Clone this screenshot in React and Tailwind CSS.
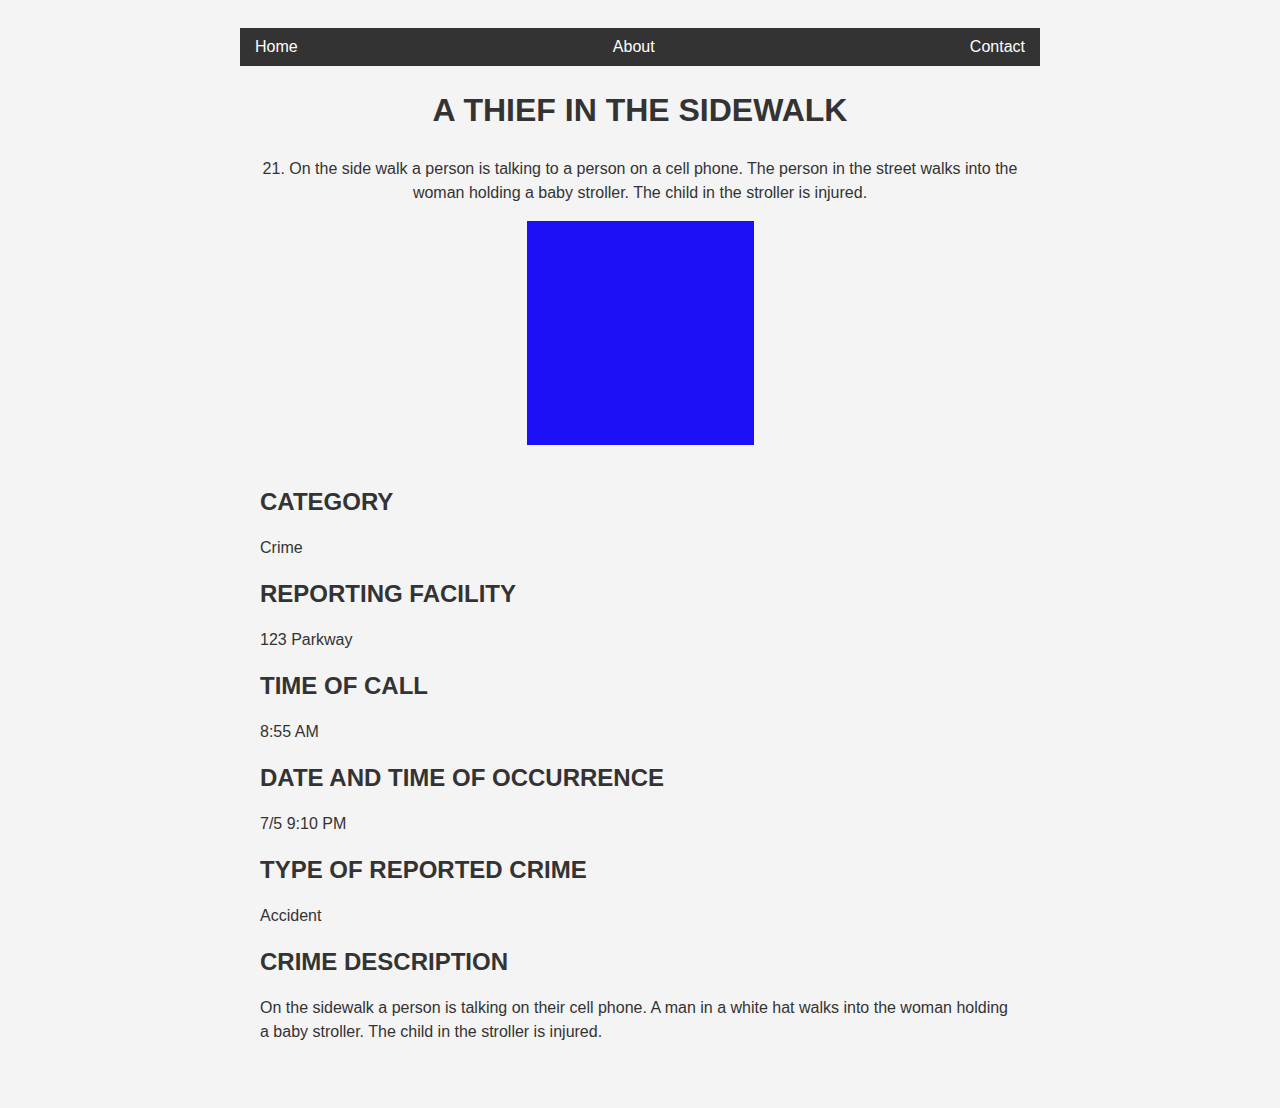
import React from 'react';

const details = [
  { label: 'CATEGORY', value: 'Crime' },
  { label: 'REPORTING FACILITY', value: '123 Parkway' },
  { label: 'TIME OF CALL', value: '8:55 AM' },
  { label: 'DATE AND TIME OF OCCURRENCE', value: '7/5 9:10 PM' },
  { label: 'TYPE OF REPORTED CRIME', value: 'Accident' },
  {
    label: 'CRIME DESCRIPTION',
    value:
      'On the sidewalk a person is talking on their cell phone. A man in a white hat walks into the woman holding a baby stroller. The child in the stroller is injured.',
  },
];

const App = () => {
  return (
    <div className="min-h-[1108px] bg-[#f4f4f4] text-[#333] font-['Liberation_Sans',Arial,sans-serif]">
      <div className="mx-auto w-[800px] pt-[28px] pb-[45px]">
        {/* Nav */}
        <nav className="flex h-[38px] items-center justify-between bg-[#333] px-[15px] text-[16px] text-white">
          <a href="#">Home</a>
          <a href="#">About</a>
          <a href="#">Contact</a>
        </nav>

        {/* Header */}
        <div className="px-[20px] text-center">
          <h1 className="mt-[26px] text-[32px] font-bold leading-[37px]">A THIEF IN THE SIDEWALK</h1>
          <p className="mt-[28px] text-[16px] leading-[24px]">
            21. On the side walk a person is talking to a person on a cell phone. The person in the street walks into the
            woman holding a baby stroller. The child in the stroller is injured.
          </p>
          <div className="mx-auto mt-[16px] h-[224px] w-[227px] bg-[#1c10f7]" />
        </div>

        {/* Details */}
        <div className="mt-[43px] px-[20px]">
          {details.map((d) => (
            <div key={d.label}>
              <h2 className="mt-[20px] text-[24px] font-bold leading-[28px]">{d.label}</h2>
              <p className="mt-[20px] text-[16px] leading-[24px]">{d.value}</p>
            </div>
          ))}
        </div>
      </div>
    </div>
  );
};

export default App;
